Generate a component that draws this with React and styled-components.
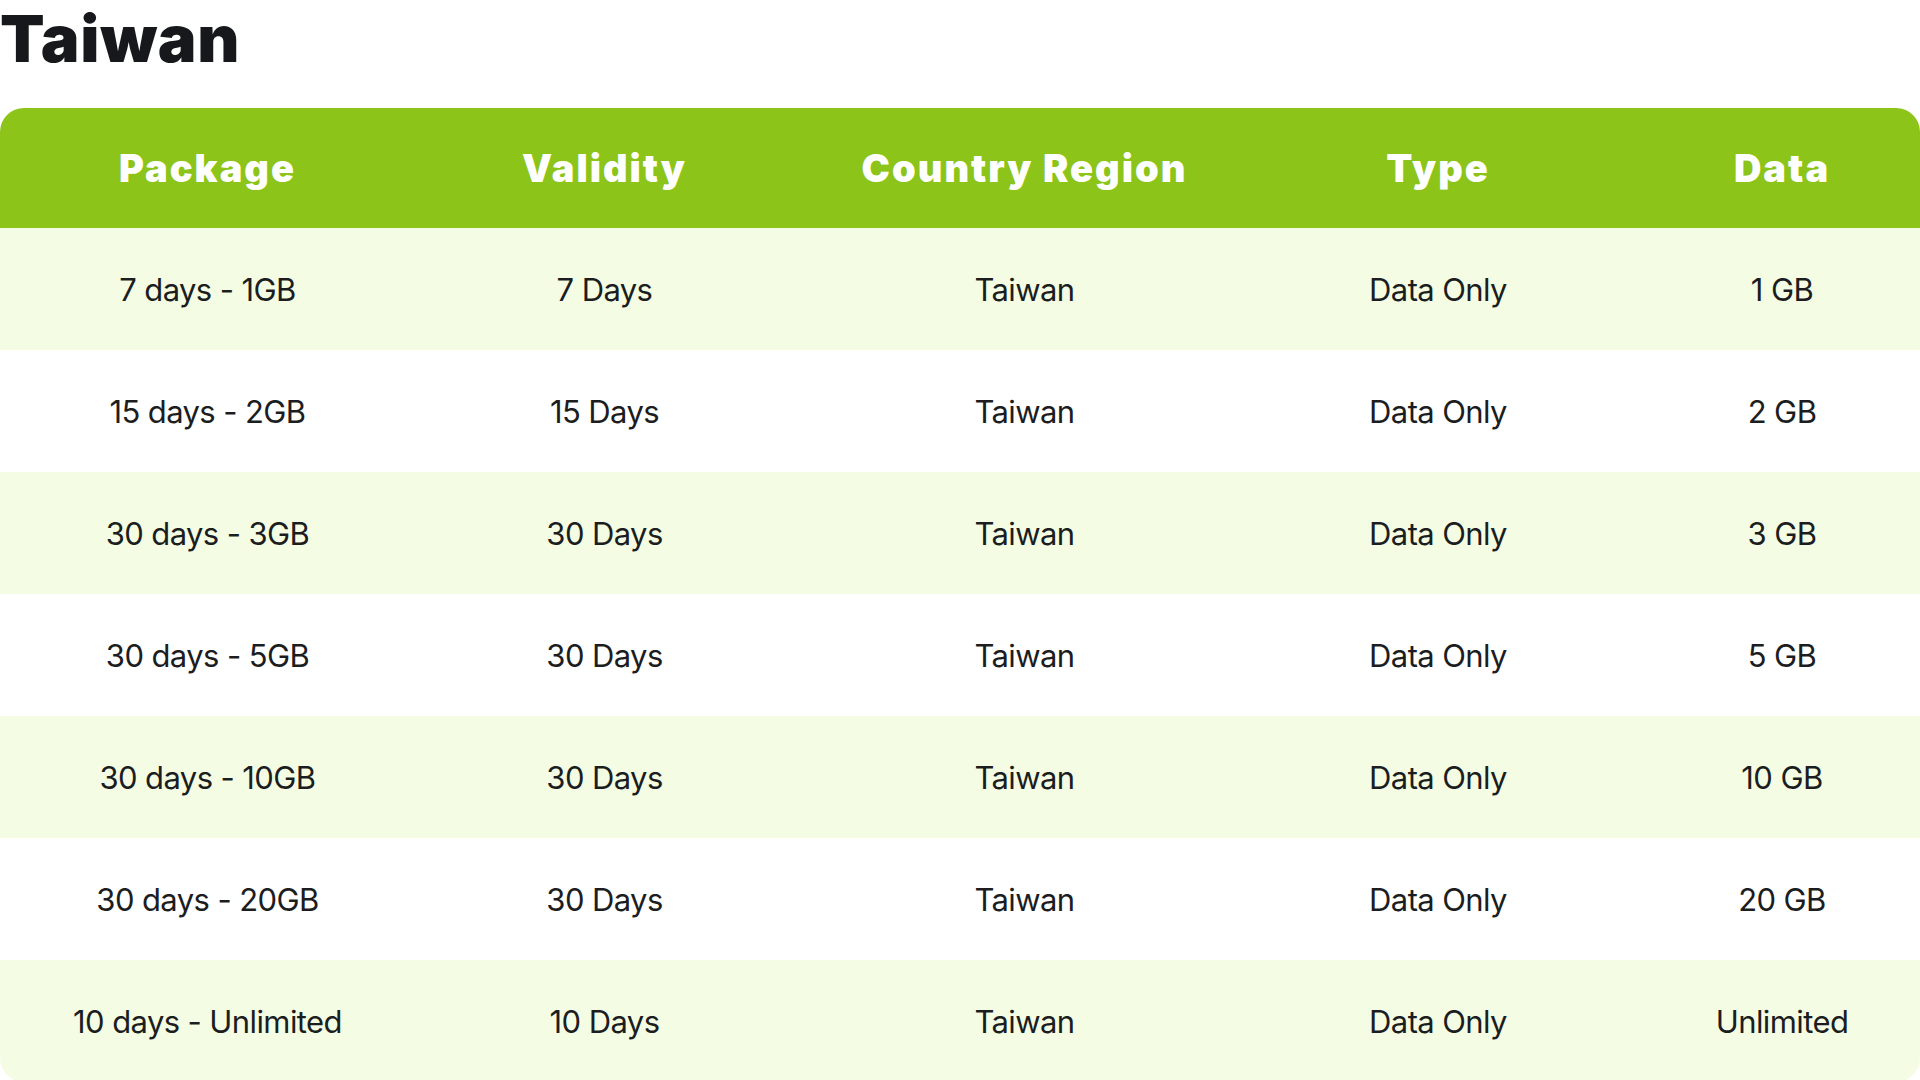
import React from "react";
import styled, { createGlobalStyle } from "styled-components";

const GlobalStyle = createGlobalStyle`
  * {
    box-sizing: border-box;
  }
  body {
    margin: 0;
    background: #ffffff;
    font-family: Inter, "Noto Sans", sans-serif;
    color: #1a1b1e;
  }
`;

const Page = styled.div`
  width: 1920px;
`;

const Title = styled.h1`
  margin: 6px 0 0;
  height: 102px;
  font-size: 65px;
  line-height: 1;
  font-weight: 900;
  letter-spacing: 0.8px;
  color: #17181b;
`;

const Table = styled.div`
  border-radius: 24px;
  overflow: hidden;
`;

const Row = styled.div`
  display: grid;
  grid-template-columns: 415px 379px 461px 366px 299px;
  align-items: center;
  height: ${props => (props.$head ? "120px" : "122px")};
  background: ${props =>
    props.$head ? "#8cc41a" : props.$striped ? "#f4fde4" : "#ffffff"};
`;

const HeadCell = styled.div`
  text-align: center;
  padding-left: ${props => (props.$shift ? "23px" : "0")};
  font-size: 38px;
  font-weight: 900;
  letter-spacing: 2px;
  color: #ffffff;
`;

const Cell = styled.div`
  text-align: center;
  padding-left: ${props => (props.$shift ? "23px" : "0")};
  font-size: 31px;
  font-weight: 400;
  letter-spacing: -0.6px;
  color: #1c1d20;
`;

const columns = ["Package", "Validity", "Country Region", "Type", "Data"];

const packages = [
  ["7 days - 1GB", "7 Days", "1 GB"],
  ["15 days - 2GB", "15 Days", "2 GB"],
  ["30 days - 3GB", "30 Days", "3 GB"],
  ["30 days - 5GB", "30 Days", "5 GB"],
  ["30 days - 10GB", "30 Days", "10 GB"],
  ["30 days - 20GB", "30 Days", "20 GB"],
  ["10 days - Unlimited", "10 Days", "Unlimited"],
];

export default function App() {
  return (
    <Page>
      <GlobalStyle />
      <Title>Taiwan</Title>
      <Table>
        <Row $head>
          {columns.map((col, i) => (
            <HeadCell key={col} $shift={i === 4}>
              {col}
            </HeadCell>
          ))}
        </Row>
        {packages.map(([name, validity, data], i) => (
          <Row key={name} $striped={i % 2 === 0}>
            <Cell>{name}</Cell>
            <Cell>{validity}</Cell>
            <Cell>Taiwan</Cell>
            <Cell>Data Only</Cell>
            <Cell $shift>{data}</Cell>
          </Row>
        ))}
      </Table>
    </Page>
  );
}
